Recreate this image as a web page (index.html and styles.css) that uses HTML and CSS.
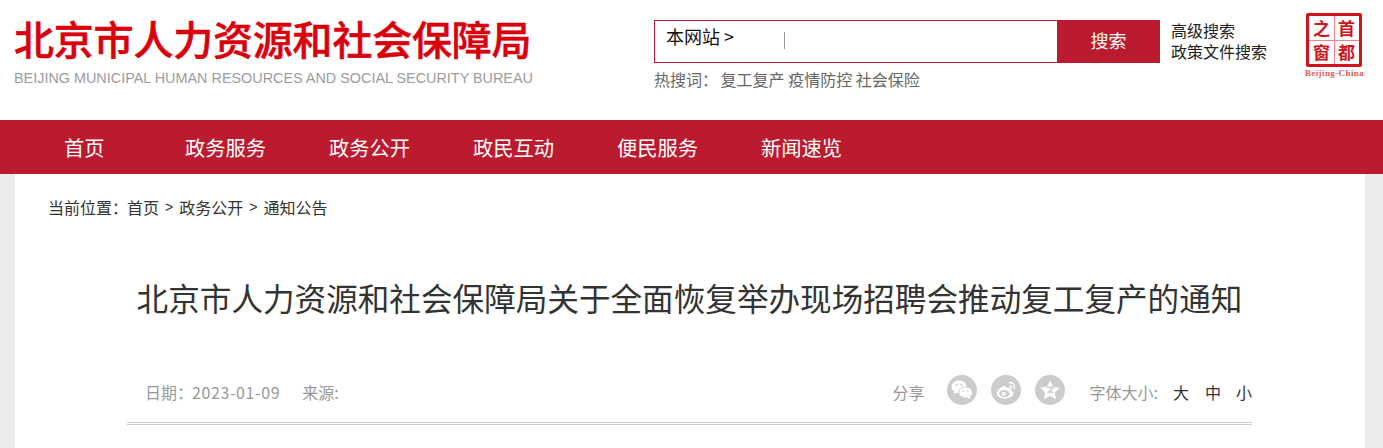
FILE: index.html
```html
<!DOCTYPE html>
<html lang="zh-CN">
<head>
  <meta charset="UTF-8">
  <title>北京市人力资源和社会保障局</title>
  <link rel="stylesheet" href="styles.css">
</head>
<body>
  <!-- 顶部 -->
  <header class="top">
    <a class="logo">
      <div class="logo-cn">北京市人力资源和社会保障局</div>
      <div class="logo-en">BEIJING MUNICIPAL HUMAN RESOURCES AND SOCIAL SECURITY BUREAU</div>
    </a>
    <div class="search">
      <div class="search-box">
        <div class="search-scope">本网站 &gt;</div>
        <div class="search-input"><i class="caret"></i></div>
        <button class="search-btn">搜索</button>
      </div>
      <div class="hot">
        <span class="hot-label">热搜词：</span>
        <a>复工复产</a> <a>疫情防控</a> <a>社会保险</a>
      </div>
    </div>
    <div class="links">
      <a>高级搜索</a>
      <a>政策文件搜索</a>
    </div>
    <div class="seal">
      <div class="seal-box">
        <span>之</span><span>首</span><span>窗</span><span>都</span>
      </div>
      <div class="seal-en">Beijing-China</div>
    </div>
  </header>

  <!-- 导航 -->
  <nav class="nav">
    <a class="nav-home">首页</a>
    <a>政务服务</a>
    <a>政务公开</a>
    <a>政民互动</a>
    <a>便民服务</a>
    <a>新闻速览</a>
  </nav>

  <main class="main">
    <div class="crumb">
      <span class="crumb-label">当前位置：</span><a>首页</a><span class="crumb-sep">&gt;</span><a>政务公开</a><span class="crumb-sep">&gt;</span><a>通知公告</a>
    </div>
    <h1 class="title">北京市人力资源和社会保障局关于全面恢复举办现场招聘会推动复工复产的通知</h1>
    <div class="meta">
      <div class="meta-left">
        <span>日期：<span class="date">2023-01-09</span></span>
        <span>来源:</span>
      </div>
      <div class="meta-right">
        <span class="share-label">分享</span>
        <svg class="share" viewBox="0 0 30 30">
          <circle cx="15" cy="15" r="15" fill="#ccc"/>
          <ellipse cx="12.2" cy="11.8" rx="7.6" ry="6.3" fill="#fff"/>
          <path d="M7.4 15.5l-1 3.4 3.6-2z" fill="#fff"/>
          <ellipse cx="18.6" cy="17.4" rx="6.8" ry="5.6" fill="#fff" stroke="#ccc"/>
          <path d="M22.4 21.5l1.4 2.7-3.6-1.8z" fill="#fff"/>
          <circle cx="9.6" cy="9.8" r="1.1" fill="#ccc"/>
          <circle cx="14.6" cy="9.8" r="1.1" fill="#ccc"/>
          <circle cx="16.2" cy="15.8" r=".9" fill="#ccc"/>
          <circle cx="20.8" cy="15.8" r=".9" fill="#ccc"/>
        </svg>
        <svg class="share" viewBox="0 0 30 30">
          <circle cx="15" cy="15" r="15" fill="#ccc"/>
          <path d="M13 11c-3.600 1-7.200 4.400-7.200 7.600 0 3 3.600 4.900 7.900 4.900 5 0 8.900-2.700 8.900-5.300 0-1.700-1.500-2.500-2.600-2.800 .5-1.300 .3-2.400-.6-2.800-1.200-.5-3 .1-4.200 .7 .3-1.200-.5-2.700-2.200-2.300z" fill="#fff"/>
          <ellipse cx="13.400" cy="18.600" rx="5.200" ry="3.600" fill="#ccc"/>
          <ellipse cx="12.800" cy="18.900" rx="2.300" ry="1.900" fill="#fff"/>
          <path d="M18.500 7.800c3.600-.7 6 2.400 4.800 5.800" fill="none" stroke="#fff" stroke-width="1.400" stroke-linecap="round"/>
          <path d="M18.900 10.600c1.600-.2 2.400 1.100 2 2.400" fill="none" stroke="#fff" stroke-width="1.200" stroke-linecap="round"/>
        </svg>
        <svg class="share" viewBox="0 0 30 30">
          <circle cx="15" cy="15" r="15" fill="#ccc"/>
          <path d="M15 5.500l3 6.300 6.800 .9-5 4.700 1.300 6.800-6.100-3.300-6.100 3.300 1.300-6.800-5-4.700 6.800-.9z" fill="#fff"/>
          <path d="M11.800 12.600h6.400l-4.600 4.600h4.800" fill="none" stroke="#ccc" stroke-width="1.500"/>
        </svg>
        <span class="size-label">字体大小:</span>
        <a class="size">大</a>
        <a class="size">中</a>
        <a class="size">小</a>
      </div>
    </div>
  </main>
</body>
</html>
```

FILE: styles.css
```css
* { box-sizing: border-box; }

html, body {
  height: 100%;
}

body {
  margin: 0;
  display: flex;
  flex-direction: column;
  overflow: hidden;
  background-color: #ebebeb;
  font-family: "Noto Sans CJK SC", "Liberation Sans", sans-serif;
  font-size: 16px;
  color: #333;
}

a { color: inherit; text-decoration: none; }

/* top */
.top {
  height: 120px;
  flex: none;
  display: flex;
  background-color: #fff;
}
.logo {
  width: 640px;
  padding: 16px 0 0 14px;
  flex: none;
}
.logo-cn {
  font-size: 40px;
  line-height: 44px;
  font-weight: 500;
  color: #d9000b;
  white-space: nowrap;
  letter-spacing: -0.2px;
  -webkit-text-stroke: .5px #d9000b;
}
.logo-en {
  margin-top: 7px;
  font-family: "Liberation Sans", sans-serif;
  font-size: 14.4px;
  line-height: 22px;
  color: #9c9c9c;
  white-space: nowrap;
}
.search {
  width: 506px;
  margin-left: 14px;
  padding-top: 20px;
  flex: none;
}
.search-box {
  height: 43px;
  display: flex;
  border: 1px solid #bb1b2e;
}
.search-scope {
  width: 129px;
  padding: 3px 0 0 11px;
  font-size: 18px;
  line-height: 24px;
  color: #111;
}
.search-input { flex: 1; padding-top: 11px; }
.caret {
  display: block;
  width: 1px;
  height: 17px;
  background-color: #999;
}
.search-btn {
  width: 103px;
  margin: -1px -1px -1px 0;
  padding: 0 0 4px;
  border: 0;
  background-color: #bb1b2e;
  color: #fff;
  font: inherit;
  font-size: 18px;
}
.hot {
  margin-top: 5px;
  line-height: 22px;
  color: #666;
  white-space: nowrap;
}
.hot-label { margin-right: -1px; }
.links {
  margin-left: 11px;
  padding-top: 20px;
  width: 134px;
  flex: none;
  display: flex;
  flex-direction: column;
  line-height: 21px;
  color: #222;
}
.seal {
  width: 61px;
  padding-top: 13px;
  flex: none;
  text-align: center;
}
.seal-box {
  width: 56px;
  height: 54px;
  margin-left: 1px;
  display: grid;
  grid-template-columns: 1fr 1fr;
  grid-template-rows: 1fr 1fr;
  border: 3px solid #d2131c;
  border-radius: 2px;
  background:
    linear-gradient(#e88, #e88) center / 1px 100% no-repeat,
    linear-gradient(#e88, #e88) center / 100% 1px no-repeat;
  color: #d2131c;
  font-size: 17px;
  line-height: 24px;
  font-weight: 700;
}
.seal-box span { text-align: center; }
.seal-en {
  margin-top: 2px;
  margin-left: -2px;
  font-family: "Liberation Serif", serif;
  font-size: 9px;
  line-height: 9px;
  font-weight: 700;
  letter-spacing: .4px;
  color: #dd5a60;
  white-space: nowrap;
}

/* nav */
.nav {
  height: 54px;
  flex: none;
  display: flex;
  gap: 63px;
  padding-left: 64px;
  background-color: #bb1b2e;
  color: #fff;
  font-size: 20.300px;
  line-height: 55px;
}
.nav a { width: 81px; white-space: nowrap; }
.nav .nav-home { width: 58px; }

/* main */
.main {
  flex: 1;
  margin: 0 18px 0 15px;
  padding: 0 113px 0 112px;
  background-color: #fff;
}
.crumb {
  height: 47px;
  margin-left: -79px;
  padding-top: 19px;
  display: flex;
  align-items: center;
  line-height: 24px;
  white-space: nowrap;
}
.crumb-label { margin-right: -1px; }
.crumb-sep {
  margin: 0 6px;
  font-family: "Liberation Sans", sans-serif;
  font-size: 14px;
}
.title {
  margin: 53px 0 0;
  font-size: 31.600px;
  line-height: 46px;
  font-weight: 400;
  text-align: center;
  white-space: nowrap;
}
.meta {
  height: 48px;
  margin-top: 57px;
  display: flex;
  justify-content: space-between;
  padding: 0 0 0 18px;
  border-bottom: 3px double #ccc;
  color: #999;
  line-height: 30px;
  align-items: flex-start;
}
.meta-left { display: flex; gap: 22px; }
.date { margin-left: -1px; letter-spacing: .6px; }
.meta-right { display: flex; align-items: center; }
.share-label { margin-right: 22px; }
.share { width: 30px; height: 30px; margin: -4px 14px 0 0; }
.size-label { margin: 0 15px 0 11px; }
.size { width: 16px; margin-right: 15px; color: #333; }
.size:first-of-type { margin-right: 16px; }
.size:last-child { margin-right: 0; }
```
